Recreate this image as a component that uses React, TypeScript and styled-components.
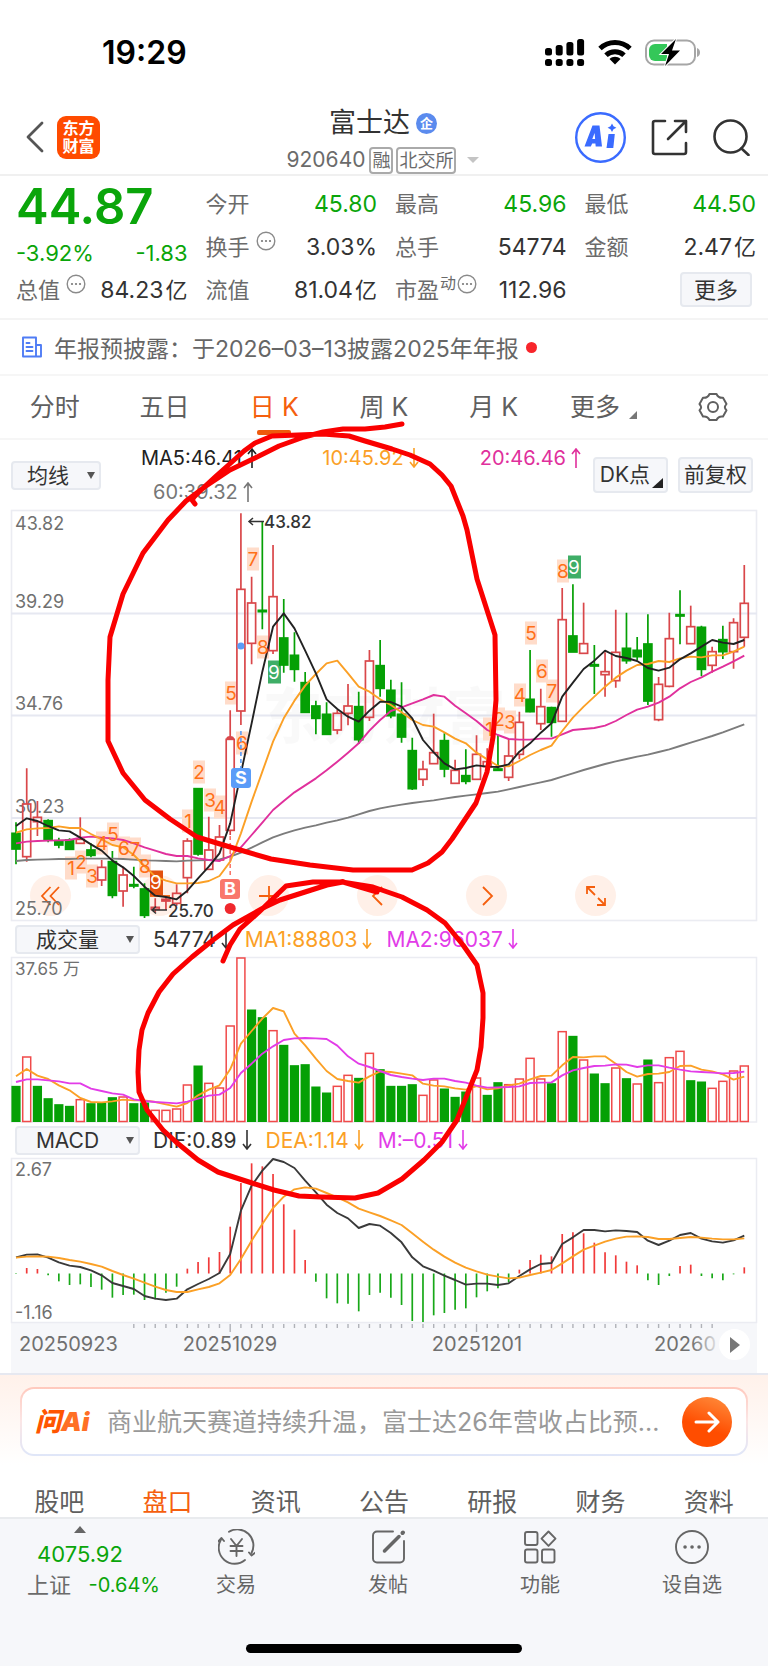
import React from "react";
import styled, { createGlobalStyle } from "styled-components";

const GREEN = "#0aa50a";
const UP = "#d9474a";
const DOWN = "#05a005";
const ORANGE = "#f55f0e";
const GOLD = "#fba026";
const PINK = "#e0309c";
const VIOLET = "#e23ce8";
const INK = "#333";
const MUTED = "#6b6b6b";

const Global = createGlobalStyle`
  *, *::before, *::after { box-sizing: border-box; }
  body { margin: 0; background: #fff; }
  body, button, select {
    font-family: Inter, "Noto Sans CJK SC", sans-serif;
    color: ${INK};
  }
  button { border: 0; padding: 0; background: none; }
  a { color: inherit; text-decoration: none; }
  svg { display: block; }
`;

/* ---------- shell ---------- */

const Page = styled.main`
  position: relative;
  display: flex;
  flex-direction: column;
  background: #fff;
  overflow: hidden;
`;

const StatusBar = styled.div`
  display: flex;
  align-items: center;
  justify-content: space-between;
  padding: 32px 67px 24px 102px;
  line-height: 40px;
`;

const Clock = styled.time`
  padding-top: 1px;
  font-size: 32px;
  font-weight: 600;
  line-height: 39px;
  color: #000;
`;

const StatusIcons = styled.div`
  display: flex;
  align-items: center;
  gap: 13px;
`;

const Header = styled.header`
  display: grid;
  grid-template-columns: 1fr auto 1fr;
  align-items: center;
  height: 80px;
  padding: 0 18px 0 26px;
  border-bottom: 2px solid #f0f0f0;
`;

const HeaderSide = styled.div<{ $end?: boolean }>`
  display: flex;
  align-items: center;
  justify-content: ${(p) => (p.$end ? "flex-end" : "flex-start")};
  gap: ${(p) => (p.$end ? 25 : 13)}px;
`;

const Logo = styled.a`
  display: grid;
  place-content: center;
  width: 43px;
  height: 43px;
  border-radius: 9px;
  background: #ff4b00;
  color: #fff;
  font-size: 16px;
  font-weight: 700;
  line-height: 18px;
`;

const Title = styled.div`
  display: flex;
  flex-direction: column;
  align-items: center;
  padding: 8px 10px 0 0;
`;

const NameRow = styled.h1`
  display: flex;
  align-items: center;
  gap: 6px;
  margin: 0;
  font-size: 27px;
  font-weight: 400;
  line-height: 38px;
`;

const Badge = styled.span`
  width: 21px;
  height: 21px;
  border-radius: 50%;
  background: #5b8bee;
  color: #fff;
  font-size: 13px;
  font-weight: 700;
  line-height: 21px;
  text-align: center;
`;

const CodeRow = styled.div`
  display: flex;
  align-items: center;
  gap: 4px;
  font-size: 21px;
  line-height: 36px;
  color: ${MUTED};
`;

const Tag = styled.span`
  height: 27px;
  padding: 0 1px;
  border: 2px solid #aaa;
  border-radius: 4px;
  font-size: 18px;
  line-height: 23px;
  & + & { margin-left: -1px; }
`;

const Caret = styled.span`
  margin-left: 7px;
  border: 6px solid transparent;
  border-top-color: #c4c4c4;
  border-bottom: 0;
`;

/* ---------- quote ---------- */

const Quote = styled.section`
  display: grid;
  grid-template-columns: repeat(4, 1fr);
  grid-auto-rows: 43px;
  column-gap: 18px;
  padding: 6px 12px 7px 16px;
  border-bottom: 2px solid #f4f4f4;
`;

const PriceBlock = styled.div`
  grid-row: span 2;
  display: flex;
  flex-direction: column;
  color: ${GREEN};
`;

const Price = styled.strong`
  font-size: 49px;
  font-weight: 600;
  line-height: 50px;
`;

const Change = styled.div`
  display: flex;
  justify-content: space-between;
  font-size: 22px;
  line-height: 43px;
`;

const Cell = styled.div<{ $green?: boolean }>`
  display: flex;
  align-items: center;
  font-size: 22px;
  line-height: 30px;
  white-space: nowrap;
  color: ${MUTED};
  b {
    margin-left: auto;
    font-size: 23px;
    font-weight: 400;
    color: ${(p) => (p.$green ? GREEN : INK)};
  }
  sup {
    align-self: flex-start;
    font-size: 16px;
    line-height: 30px;
    padding-left: 1px;
  }
`;

const Unit = styled.span`
  margin-left: 2px;
  font-size: 22px;
`;

const Hint = styled.svg`
  align-self: flex-start;
  margin: 6px 0 0 6px;
  sup + & { margin-left: 1px; }
`;

const SoftButton = styled.button<{ $size: number }>`
  position: relative;
  height: ${(p) => p.$size}px;
  padding: 0 9px;
  border: 2px solid #e6e9ef;
  border-radius: 4px;
  background: #f6f7fa;
  font-size: 21px;
  line-height: 30px;
  white-space: nowrap;
`;

const MoreButton = styled(SoftButton)`
  margin: 0 4px 0 auto;
  padding: 0 12px;
  font-size: 22px;
`;

const News = styled.a`
  display: flex;
  align-items: center;
  height: 56px;
  padding: 0 21px;
  border-bottom: 2px solid #f6f6f6;
  font-size: 23px;
  color: #666;
  white-space: nowrap;
  span { margin-left: 11px; }
`;

const RedDot = styled.i`
  width: 11px;
  height: 11px;
  margin-left: 7px;
  border-radius: 50%;
  background: #f8252b;
`;

/* ---------- tabs ---------- */

const Tabs = styled.nav<{ $low?: boolean }>`
  display: grid;
  grid-template-columns: repeat(7, 1fr);
  height: ${(p) => (p.$low ? 33 : 64)}px;
  padding: 0 ${(p) => (p.$low ? 5 : 0)}px;
  border-bottom: 2px solid ${(p) => (p.$low ? "#e9ebee" : "#f6f6f6")};
`;

const Tab = styled.button<{ $active?: boolean; $line?: boolean }>`
  position: relative;
  display: flex;
  align-items: center;
  justify-content: center;
  font-size: 25px;
  line-height: 30px;
  white-space: nowrap;
  color: ${(p) => (p.$active ? ORANGE : "#5f5f5f")};
  &::after {
    content: "";
    display: ${(p) => (p.$active && p.$line ? "block" : "none")};
    position: absolute;
    bottom: 3px;
    width: 34px;
    height: 5px;
    border-radius: 2px;
    background: #ee5a0c;
  }
`;

const Corner = styled.i<{ $over?: boolean }>`
  position: ${(p) => (p.$over ? "absolute" : "static")};
  right: 3px;
  bottom: 3px;
  align-self: flex-end;
  margin: ${(p) => (p.$over ? "0" : "0 0 19px 9px")};
  border-left: ${(p) => (p.$over ? 11 : 8)}px solid transparent;
  border-bottom: ${(p) => (p.$over ? 10 : 8)}px solid ${(p) => (p.$over ? "#222" : "#777")};
`;

/* ---------- chart ---------- */

const Averages = styled.div`
  display: flex;
  align-items: center;
  height: 70px;
  padding: 0 15px 0 11px;
`;

const Picker = styled.label<{ $wide?: boolean }>`
  position: relative;
  display: block;
  width: ${(p) => (p.$wide ? 125 : 90)}px;
  flex: none;
  &::after {
    content: "";
    position: absolute;
    right: 6px;
    top: 11px;
    border: 4px solid transparent;
    border-top: 7px solid #555;
    border-bottom: 0;
  }
  select {
    display: block;
    appearance: none;
    width: 100%;
    height: 29px;
    padding: 0 ${(p) => (p.$wide ? 20 : 16)}px 0 0;
    border: 2px solid #e6e9ef;
    border-radius: 4px;
    background: #f6f7fa;
    font-size: 21px;
    line-height: 25px;
    text-align: center;
    text-align-last: center;
  }
`;

const AverageGrid = styled.div`
  flex: 1;
  display: grid;
  grid-template-columns: 1fr 1fr auto;
  align-items: center;
  padding: 0 11px 0 40px;
  line-height: 34px;
`;

const Reading = styled.span<{ $color: string; $inset?: boolean }>`
  display: flex;
  align-items: center;
  gap: 4px;
  padding-left: ${(p) => (p.$inset ? 12 : 0)}px;
  font-size: 20px;
  white-space: nowrap;
  color: ${(p) => p.$color};
`;

const ButtonPair = styled.div`
  display: flex;
  gap: 10px;
`;

const PairButton = styled(SoftButton)<{ $pick?: boolean }>`
  width: 75px;
  padding: 0 ${(p) => (p.$pick ? 11 : 0)}px 0 0;
`;

const PlotArea = styled.div`
  position: relative;
  margin: 0 11px;
`;

const Plot = styled.svg`
  position: relative;
  z-index: 1;
  width: 100%;
  height: auto;
  overflow: visible;
  pointer-events: none;
  text { font-family: Inter, "Noto Sans CJK SC", sans-serif; }
`;

const Controls = styled.div`
  position: absolute;
  left: 19px;
  bottom: 5px;
  display: flex;
  gap: 68px;
`;

const RoundButton = styled.button`
  display: grid;
  place-items: center;
  width: 41px;
  height: 41px;
  border-radius: 50%;
  background: #fff0e8;
`;

const Indicator = styled.div`
  display: flex;
  align-items: center;
  gap: 13px;
  height: 36px;
  padding: 0 15px;
  ${Reading} { font-size: 21px; }
`;

const Axis = styled.div`
  position: relative;
  margin: 0 11px;
  background: #f6f7fa;
`;

const PlayButton = styled.button`
  position: absolute;
  z-index: 2;
  right: 7px;
  top: 6px;
  display: grid;
  place-items: center;
  width: 31px;
  height: 31px;
  border-radius: 50%;
  background: #fff;
`;

/* ---------- assistant and footer ---------- */

const AskSection = styled.section`
  padding: 12px 20px 30px;
  border-top: 2px solid #e6e8f0;
  background: linear-gradient(#fff1ea, #fff 90px);
`;

const AskFrame = styled.div`
  padding: 2px;
  border-radius: 14px;
  background: linear-gradient(#ffc9bd, #fbe6e6 50%, #dfe6f8);
`;

const AskBox = styled.div`
  display: flex;
  align-items: center;
  height: 65px;
  padding: 0 14px 0 13px;
  border-radius: 12px;
  background: #fff;
`;

const AskLogo = styled.strong`
  flex: none;
  width: 58px;
  font-size: 26px;
  font-style: italic;
  font-weight: 900;
  line-height: 30px;
  white-space: nowrap;
  color: #ff5500;
  span { color: #ff6f25; }
`;

const AskText = styled.span`
  flex: 1;
  min-width: 0;
  padding-left: 14px;
  font-size: 25px;
  line-height: 32px;
  color: #999;
  white-space: nowrap;
`;

const SendButton = styled.button`
  display: grid;
  place-items: center;
  flex: none;
  width: 50px;
  height: 50px;
  border-radius: 50%;
  background: linear-gradient(20deg, #ff4d00 40%, #ff9040);
`;

const Dock = styled.footer`
  display: flex;
  flex-direction: column;
  background: #f6f7fa;
`;

const DockRow = styled.nav`
  display: grid;
  grid-template-columns: 160px repeat(4, 1fr);
  height: 125px;
  padding-top: 7px;
`;

const IndexCard = styled.a`
  display: flex;
  flex-direction: column;
  padding-left: 27px;
  font-size: 22px;
  line-height: 31px;
  color: ${GREEN};
  &::before {
    content: "";
    align-self: flex-start;
    margin: 0 0 6px 47px;
    border: 6px solid transparent;
    border-top: 0;
    border-bottom: 7px solid #666;
  }
`;

const IndexValue = styled.span`
  padding-left: 10px;
`;

const IndexLine = styled.span`
  display: flex;
  justify-content: space-between;
  font-size: 20px;
  em { font-style: normal; font-size: 22px; color: ${MUTED}; }
`;

const DockItem = styled.button`
  display: flex;
  flex-direction: column;
  align-items: center;
  padding-top: 3px;
  font-size: 20px;
  line-height: 40px;
  color: #666;
`;

const HomeBar = styled.div`
  align-self: center;
  width: 36%;
  height: 9px;
  margin-bottom: 14px;
  border-radius: 5px;
  background: #000;
`;

const Ink = styled.svg`
  position: absolute;
  z-index: 3;
  inset: 0;
  width: 100%;
  height: auto;
  pointer-events: none;
`;

/* ---------- data ---------- */

// Levels in the plots are stored at three steps per pixel.
const STEP = 3;
const xAt = (i: number) => 5 + i * 10.71;
const yAt = (level: number, top: number) => (level - top) / STEP;

// direction, high, body top, body bottom, low
type Candle = [0 | 1, number, number, number, number];
const candles: Candle[] = [
  [0, 967, 1000, 1047, 1093], [1, 805, 912, 1070, 1085], [1, 903, 952, 965, 1008], [0, 958, 962, 1020, 1027],
  [0, 1013, 1022, 1035, 1045], [0, 1015, 1020, 1048, 1050], [1, 952, 1018, 1030, 1030], [0, 1030, 1050, 1066, 1072],
  [1, 1080, 1102, 1140, 1158], [0, 1053, 1085, 1186, 1195], [1, 1100, 1125, 1173, 1220], [0, 1100, 1154, 1158, 1165],
  [0, 1150, 1167, 1246, 1254], [1, 1195, 1222, 1228, 1237], [1, 1190, 1198, 1203, 1230], [1, 1153, 1180, 1210, 1217],
  [1, 1015, 1023, 1133, 1180], [0, 866, 866, 1062, 1067], [1, 950, 1050, 1108, 1110], [1, 975, 1011, 1080, 1085],
  [1, 631, 718, 991, 1005], [1, 40, 268, 633, 675], [1, 230, 309, 430, 493], [0, 65, 331, 335, 388],
  [1, 135, 290, 452, 462], [0, 297, 414, 495, 518], [0, 397, 466, 508, 545], [0, 516, 548, 637, 637],
  [0, 602, 618, 655, 703], [0, 607, 643, 703, 705], [1, 630, 640, 690, 703], [1, 552, 618, 640, 676],
  [0, 575, 620, 719, 732], [1, 450, 483, 652, 663], [0, 420, 497, 565, 590], [0, 539, 571, 647, 655],
  [0, 547, 643, 711, 728], [0, 713, 752, 866, 870], [1, 782, 808, 838, 858], [1, 641, 758, 791, 791],
  [0, 700, 722, 807, 832], [1, 779, 811, 850, 852], [0, 748, 827, 844, 853], [1, 706, 763, 838, 840],
  [1, 745, 785, 800, 820], [0, 705, 807, 811, 812], [1, 717, 768, 832, 843], [1, 635, 667, 763, 778],
  [0, 450, 598, 635, 637], [1, 566, 620, 671, 690], [0, 620, 623, 667, 710], [1, 264, 359, 664, 665],
  [0, 253, 408, 456, 456], [1, 308, 431, 460, 460], [0, 435, 494, 498, 582], [1, 457, 515, 524, 590],
  [1, 329, 457, 542, 563], [0, 338, 445, 482, 491], [0, 411, 451, 470, 480], [0, 343, 432, 603, 615],
  [1, 531, 553, 659, 664], [1, 338, 416, 559, 562], [0, 271, 344, 348, 433], [1, 317, 380, 431, 431],
  [0, 377, 382, 508, 528], [1, 440, 455, 496, 518], [0, 377, 419, 455, 477], [1, 355, 368, 455, 506],
  [1, 195, 310, 412, 440],
];

const ma5 = [978, 955, 963, 978, 991, 994, 1013, 1033, 1052, 1082, 1102, 1128, 1160, 1187, 1191, 1198, 1172, 1135, 1100, 1060, 970, 820, 670, 515, 380, 340, 385, 452, 520, 598, 627, 650, 665, 632, 605, 606, 620, 655, 720, 757, 790, 808, 804, 796, 800, 801, 793, 755, 730, 698, 670, 590, 548, 507, 482, 452, 468, 474, 483, 504, 512, 503, 478, 460, 440, 420, 428, 432, 420];
const ma10 = [998, 988, 985, 984, 979, 984, 984, 1002, 1018, 1035, 1042, 1065, 1098, 1130, 1142, 1150, 1150, 1149, 1143, 1128, 1085, 1000, 905, 815, 725, 655, 602, 557, 522, 490, 482, 520, 560, 575, 598, 615, 637, 660, 675, 680, 697, 716, 730, 758, 778, 798, 799, 783, 765, 750, 737, 693, 653, 620, 590, 560, 533, 512, 495, 492, 483, 486, 475, 470, 472, 466, 466, 455, 440];
const ma20 = [1030, 1025, 1023, 1022, 1021, 1020, 1013, 1010, 1013, 1015, 1020, 1030, 1042, 1052, 1062, 1068, 1068, 1075, 1080, 1083, 1068, 1042, 1005, 968, 930, 903, 877, 856, 835, 811, 785, 758, 730, 692, 660, 633, 622, 610, 598, 585, 590, 617, 640, 663, 690, 705, 717, 719, 719, 716, 716, 703, 690, 687, 684, 677, 663, 645, 629, 620, 608, 590, 565, 546, 532, 515, 500, 484, 467];
const ma60 = [1083, 1080, 1079, 1078, 1077, 1077, 1076, 1076, 1076, 1076, 1077, 1079, 1081, 1082, 1083, 1084, 1082, 1081, 1080, 1078, 1070, 1058, 1043, 1027, 1012, 1001, 991, 983, 976, 968, 961, 953, 943, 933, 925, 919, 914, 909, 905, 901, 896, 891, 887, 883, 879, 875, 868, 861, 854, 847, 840, 830, 820, 810, 801, 792, 784, 777, 770, 764, 756, 748, 738, 728, 718, 708, 697, 685, 673];

const volumes = [498, 410, 498, 535, 553, 558, 538, 550, 548, 532, 530, 550, 548, 570, 570, 566, 494, 437, 489, 503, 317, 113, 269, 292, 331, 375, 436, 433, 500, 518, 498, 465, 474, 399, 448, 498, 498, 493, 525, 479, 506, 531, 515, 473, 525, 487, 493, 476, 414, 476, 490, 334, 348, 419, 461, 490, 443, 475, 491, 419, 487, 412, 393, 481, 485, 504, 483, 452, 437];
const volumeDirs = [0, 1, 0, 0, 0, 0, 1, 0, 0, 0, 1, 0, 0, 1, 1, 1, 1, 0, 1, 1, 1, 1, 0, 0, 1, 0, 0, 0, 0, 0, 1, 1, 0, 1, 0, 0, 0, 0, 1, 1, 0, 0, 0, 1, 0, 0, 1, 1, 1, 1, 0, 1, 0, 1, 0, 0, 1, 0, 1, 0, 1, 1, 1, 0, 0, 1, 1, 1, 1];
const volMa1 = [468, 446, 466, 476, 495, 510, 533, 545, 546, 543, 538, 540, 540, 545, 552, 559, 548, 525, 508, 495, 447, 370, 332, 295, 263, 273, 340, 375, 415, 452, 476, 482, 487, 468, 453, 455, 460, 465, 490, 496, 498, 504, 508, 497, 507, 504, 495, 490, 477, 467, 466, 435, 410, 411, 408, 408, 430, 455, 469, 461, 460, 455, 437, 436, 448, 453, 462, 478, 469];
const volMa2 = [485, 477, 477, 480, 483, 489, 489, 505, 512, 519, 523, 537, 542, 545, 547, 549, 544, 535, 526, 523, 503, 458, 430, 400, 378, 359, 354, 353, 354, 356, 376, 408, 430, 440, 452, 464, 470, 475, 479, 475, 475, 482, 487, 496, 502, 501, 500, 498, 488, 487, 486, 465, 450, 443, 437, 436, 432, 433, 440, 435, 435, 442, 448, 453, 455, 457, 459, 458, 454];

const macd = [460, 442, 445, 464, 482, 493, 491, 499, 507, 531, 523, 522, 538, 536, 516, 498, 444, 424, 410, 394, 318, 187, 128, 137, 160, 251, 327, 418, 483, 533, 548, 549, 572, 523, 516, 531, 553, 601, 604, 584, 577, 567, 563, 530, 512, 503, 485, 447, 418, 402, 407, 340, 335, 338, 366, 395, 404, 423, 434, 479, 493, 466, 436, 432, 466, 473, 479, 461, 440];
const dif = [410, 402, 401, 411, 425, 435, 439, 449, 464, 487, 496, 505, 526, 534, 538, 534, 506, 490, 475, 457, 400, 270, 195, 150, 115, 124, 142, 180, 215, 252, 277, 293, 322, 310, 315, 337, 365, 410, 437, 450, 465, 478, 492, 489, 489, 493, 488, 466, 446, 430, 427, 370, 350, 328, 328, 332, 329, 331, 334, 360, 373, 360, 343, 337, 354, 362, 366, 359, 345];
const dea = [411, 408, 407, 408, 412, 418, 423, 430, 438, 451, 463, 474, 486, 498, 508, 514, 514, 506, 499, 488, 463, 415, 360, 310, 262, 228, 206, 200, 204, 217, 230, 245, 264, 275, 286, 299, 313, 338, 363, 387, 408, 426, 441, 452, 462, 468, 473, 471, 463, 456, 448, 428, 407, 387, 375, 363, 354, 348, 347, 349, 355, 355, 352, 349, 351, 354, 356, 356, 353];

// label, centre x, centre y, style
const counts: [string, number, number, "n" | "g" | "r"][] = [
  ["1", 60, 358, "n"], ["2", 70, 352, "n"], ["3", 81, 366, "n"], ["4", 91, 333, "n"], ["5", 102, 324, "n"],
  ["6", 113, 338, "n"], ["7", 124, 339, "n"], ["8", 134, 356, "n"], ["9", 145, 372, "r"], ["1", 177, 311, "n"],
  ["2", 188, 262, "n"], ["3", 199, 290, "n"], ["4", 209, 297, "n"], ["5", 220, 183, "n"], ["6", 231, 233, "n"],
  ["7", 242, 49, "n"], ["8", 252, 137, "n"], ["9", 263, 162, "g"], ["1", 478, 219, "n"], ["2", 488, 209, "n"],
  ["3", 499, 212, "n"], ["4", 509, 185, "n"], ["5", 520, 123, "n"], ["6", 531, 161, "n"], ["7", 541, 181, "n"],
  ["8", 552, 61, "n"], ["9", 563, 57, "g"],
];
const countFill = { n: "#ffdcca", g: "#3fae67", r: "#e2510f" };

/* ---------- drawing helpers ---------- */

const Trend = ({ levels, top, color }: { levels: number[]; top: number; color: string }) => (
  <polyline
    fill="none"
    stroke={color}
    strokeWidth={1.9}
    strokeLinejoin="round"
    points={levels.map((v, i) => `${xAt(i)},${yAt(v, top)}`).join(" ")}
  />
);

const Arrow = ({ up }: { up?: boolean }) => (
  <svg width="12" height="20" viewBox="0 0 12 20" fill="none" stroke="currentColor" strokeWidth="1.6" aria-hidden="true">
    <path d={up ? "M6 20V1M2 6l4-5 4 5" : "M6 0v19M2 14l4 5 4-5"} />
  </svg>
);

const Dots = () => (
  <Hint width="20" height="20" viewBox="0 0 20 20" aria-hidden="true">
    <circle cx="10" cy="10" r="8.8" fill="none" stroke="#8a8a8a" strokeWidth="1.4" />
    {[6, 10, 14].map((x) => (
      <circle key={x} cx={x} cy="10" r="1.1" fill="#777" />
    ))}
  </Hint>
);

const PriceChart = () => (
  <Plot viewBox="0 0 746 411" role="img" aria-label="日K线图">
    <rect x="0.5" y="0.5" width="745" height="410" fill="none" stroke="#ebecf2" strokeWidth="1.6" />
    {[103.5, 205.5, 308].map((y) => (
      <path key={y} d={`M0 ${y}H746`} stroke="#e6e8f1" strokeWidth="1.8" />
    ))}
    <text x="251" y="229" fontSize="61" fontWeight="700" fill="#000" fillOpacity="0.025">东方财富</text>
    {counts.map(([, x, y, kind], i) => (
      <rect key={i} x={x - 6} y={y - 11.5} width={kind === "n" ? 12 : 13} height={kind === "r" ? 25 : 23} fill={countFill[kind]} />
    ))}
    {["43.82", "39.29", "34.76", "30.23", "25.70"].map((t, i) => (
      <text key={t} x="4" y={[20, 98, 200, 303, 405][i]} fontSize="18" fill="#707070">{t}</text>
    ))}
    {candles.map(([up, h, t, b, l], i) => {
      const x = xAt(i);
      const [hy, ty, by, ly] = [h, t, b, l].map((v) => yAt(v, 30));
      const color = up ? UP : DOWN;
      return (
        <g key={i} stroke={color} strokeWidth="1.7">
          <path d={`M${x} ${hy}V${ty}M${x} ${by}V${ly}`} />
          <rect x={x - 4} y={ty} width="8" height={Math.max(by - ty, 0.6)} fill={up ? "none" : color} />
        </g>
      );
    })}
    <path d={`M${xAt(20) - 4} 229a4 3 0 0 1 8 0z`} fill={UP} />
    <Trend levels={ma60} top={30} color="#7c7c7c" />
    <Trend levels={ma20} top={30} color={PINK} />
    <Trend levels={ma10} top={30} color={GOLD} />
    <Trend levels={ma5} top={30} color="#222" />
    {counts.map(([label, x, y, kind], i) => (
      <text key={i} x={x} y={y + 7} fontSize="19" textAnchor="middle" fill={kind === "n" ? "#ff7018" : "#fff"}>{label}</text>
    ))}
    <path d={`M${xAt(21)} 221V262`} stroke="#5a9cf8" strokeWidth="1.6" strokeDasharray="4 3" />
    <circle cx={xAt(21)} cy="136" r="3.6" fill="#5a9cf8" />
    <rect x="220" y="258" width="20" height="20" rx="3" fill="#5a9cf8" />
    <path d={`M${xAt(20)} 326V366`} stroke="#f9776b" strokeWidth="1.6" strokeDasharray="4 3" />
    <rect x="209" y="369" width="20" height="20" rx="3" fill="#f9776b" />
    <text x="230" y="274" fontSize="18" fontWeight="700" textAnchor="middle" fill="#fff">S</text>
    <text x="219" y="385" fontSize="18" fontWeight="700" textAnchor="middle" fill="#fff">B</text>
    <circle cx={xAt(20)} cy="398.5" r="5.5" fill="#f0282d" />
    <g fill="none" stroke="#333" strokeWidth="1.5">
      <path d="M253 11.5h-15M242 8l-4 3.5 4 3.5" />
      <path d="M156 400h-15M145 396.5l-4 3.5 4 3.5" />
    </g>
    <text x="253" y="18" fontSize="17" fontWeight="500" fill="#333">43.82</text>
    <text x="157" y="407" fontSize="17" fontWeight="500" fill="#333">25.70</text>
  </Plot>
);

const VolumeChart = () => (
  <Plot viewBox="0 0 746 165" role="img" aria-label="成交量">
    <rect x="0.5" y="0.5" width="745" height="164.5" fill="#fff" stroke="#ebecf2" strokeWidth="1.5" />
    <text x="4" y="18" fontSize="17" fill="#707070">37.65 万</text>
    {volumes.map((v, i) => {
      const y = yAt(v, 110);
      return volumeDirs[i] ? (
        <rect key={i} x={xAt(i) - 4} y={y} width="8" height={164.5 - y} fill="#fff" stroke="#f04a4a" strokeWidth="1.5" />
      ) : (
        <rect key={i} x={xAt(i) - 4.6} y={y - 0.5} width="9.2" height={165.5 - y} fill={DOWN} />
      );
    })}
    <Trend levels={volMa1} top={110} color={GOLD} />
    <Trend levels={volMa2} top={110} color={VIOLET} />
  </Plot>
);

const MacdChart = () => (
  <Plot viewBox="0 0 746 165" role="img" aria-label="MACD">
    <rect x="0.5" y="0.5" width="745" height="164" fill="#fff" stroke="#ebecf2" strokeWidth="1.5" />
    {macd.map((v, i) => (
      <path key={i} d={`M${xAt(i)} 115.5V${yAt(v, 112)}`} stroke={v < 458 ? "#f13a3a" : "#18a818"} strokeWidth="1.7" />
    ))}
    <Trend levels={dif} top={112} color="#3a3a3a" />
    <Trend levels={dea} top={112} color={GOLD} />
    <text x="4" y="18" fontSize="18" fill="#707070">2.67</text>
    <text x="4" y="161" fontSize="18" fill="#707070">-1.16</text>
  </Plot>
);

const DateAxis = () => (
  <Plot viewBox="0 0 746 50" aria-hidden="true">
    <defs>
      <linearGradient id="fade">
        <stop offset="0.6" stopColor="#707070" />
        <stop offset="1" stopColor="#707070" stopOpacity="0.2" />
      </linearGradient>
    </defs>
    {Array.from({ length: 55 }, (_, k) => k + 11).map((i) => (
      <path key={i} d={`M${xAt(i)} 1V${i === 20 || i === 43 ? 9 : 5}`} stroke="#b0b2b8" strokeWidth="1.4" />
    ))}
    <g fontSize="20" fill="#707070">
      <text x="8" y="28">20250923</text>
      <text x="219" y="28" textAnchor="middle">20251029</text>
      <text x="466" y="28" textAnchor="middle">20251201</text>
      <text x="643" y="28" fill="url(#fade)">20260</text>
    </g>
  </Plot>
);

const HandMarks = () => (
  <Ink viewBox="0 0 768 1666" fill="none" stroke="#fa0000" strokeWidth="5" strokeLinecap="round" strokeLinejoin="round" aria-hidden="true">
    <polyline points="402,424 385,427 365,429 343,429 323,432 304,437 279,446 255,458 230,470 206,486 186,501 168,520 143,553 123,594 110,637 108,680 108,741 123,773 145,800 170,819 197,837 230,847 271,859 310,865 353,870 412,870 428,863 442,852 452,839 476,803 487,772 493,737 496,700 495,635 477,579 467,530 463,516 451,486 442,475 430,464 410,455 392,449 365,441 349,436 323,434 298,435 272,436 255,443 244,451 233,461 215,477 201,490 194,497 192,500 195,504" />
    <polyline points="223,961 230,945 240,929 258,913 286,886 313,882 342,882 373,887 402,897 427,910 445,923 463,945 477,965 483,993 483,1018 481,1047 477,1070 457,1120 442,1142 424,1160 402,1179 378,1193 355,1198 321,1197 299,1196 274,1190 252,1183 218,1172 198,1160 176,1142 163,1130 147,1110 139,1092 138,1072 139,1050 142,1030 148,1013 159,992 173,974 192,957 213,940 233,925 265,907 280,900 327,885 343,882 377,892" />
  </Ink>
);

const Wifi = () => (
  <svg width="34" height="26" viewBox="0 0 34 26" fill="none" stroke="#000" strokeWidth="5" aria-hidden="true">
    <path d="M2 9.5C10.5 1.5 23.5 1.5 32 9.5" />
    <path d="M8 16.2c5-4.700 13-4.700 18 0" />
    <path d="M11.5 20c3-2.900 8-2.900 11 0L17 25.500z" fill="#000" stroke="none" />
  </svg>
);

const Signal = () => (
  <svg width="40" height="27" viewBox="0 0 40 27" aria-hidden="true">
    {[9, 6, 3, 0].map((y, i) => (
      <g key={y}>
        <rect x={i * 10.7} y={y} width="7" height={16.5 - y} rx="2.5" />
        <rect x={i * 10.7} y="20" width="7" height="7" rx="2.5" />
      </g>
    ))}
  </svg>
);

const Battery = () => (
  <svg width="56" height="27" viewBox="0 0 56 27" aria-hidden="true">
    <rect x="1" y="1.5" width="49" height="24" rx="8" fill="#fff" stroke="#a6a6a6" strokeWidth="2" />
    <path d="M10 5h12v17H10a6 6 0 0 1-6-6V11a6 6 0 0 1 6-6z" fill="#34c759" />
    <path d="M52 9c4 1 4 8 0 9z" fill="#a6a6a6" />
    <path d="M31 0L16 15h8l-4 12L35 11.5h-8z" stroke="#fff" strokeWidth="2" paintOrder="stroke" />
  </svg>
);

const line = { fill: "none", stroke: "currentColor", strokeLinecap: "round" as const, strokeLinejoin: "round" as const };

const Control = ({ label, d }: { label: string; d: string }) => (
  <RoundButton aria-label={label}>
    <svg width="24" height="24" viewBox="0 0 24 24" fill="none" stroke={ORANGE} strokeWidth="1.8" aria-hidden="true">
      <path d={d} />
    </svg>
  </RoundButton>
);

const dockItems: { label: string; icon: React.ReactNode }[] = [
  {
    label: "交易",
    icon: (
      <>
        <path d="M11 2.8A16 16 0 0 1 33.5 24" />
        <path d="M27 31A16 16 0 0 1 3 10.5" />
        <path d="M0 12.5l3.5-3.5 2.5 3M31 23.5l2.5 3 4-3" />
        <path d="M13 10l5.5 7 5.5-7M12.5 17h12M12.5 22h12M18.500 17v10" />
      </>
    ),
  },
  {
    label: "发帖",
    icon: (
      <>
        <path d="M23 2.5H7a4 4 0 0 0-4 4v23a4 4 0 0 0 4 4h23a4 4 0 0 0 4-4V12" />
        <path d="M14.5 22L29 7.5" strokeWidth="3.5" />
        <path d="M32.5 4l.5-.5" strokeWidth="4" />
      </>
    ),
  },
  {
    label: "功能",
    icon: (
      <>
        <rect x="3" y="3" width="12.5" height="13" rx="2" />
        <rect x="3" y="20.5" width="12.5" height="13" rx="2" />
        <rect x="20" y="20.5" width="12.5" height="13" rx="2" />
        <path d="M26.5 2.5l7 7.2-7 7.2-7-7.2z" />
      </>
    ),
  },
  {
    label: "设自选",
    icon: (
      <>
        <circle cx="18" cy="18" r="16" />
        <path d="M11 18h.1M18 18h.1M25 18h.1" strokeWidth="3.5" />
      </>
    ),
  },
];

export default function App() {
  return (
    <Page>
      <Global />
      <StatusBar>
        <Clock>19:29</Clock>
        <StatusIcons>
          <Signal />
          <Wifi />
          <Battery />
        </StatusIcons>
      </StatusBar>

      <Header>
        <HeaderSide>
          <button aria-label="返回">
            <svg width="18" height="32" viewBox="0 0 18 32" {...line} strokeWidth="2.8" color="#555" aria-hidden="true">
              <path d="M16 2L2 16l14 14" />
            </svg>
          </button>
          <Logo href="#home">
            <span>东方</span>
            <span>财富</span>
          </Logo>
        </HeaderSide>
        <Title>
          <NameRow>
            富士达<Badge>企</Badge>
          </NameRow>
          <CodeRow>
            920640
            <Tag>融</Tag>
            <Tag>北交所</Tag>
            <Caret />
          </CodeRow>
        </Title>
        <HeaderSide $end>
          <button aria-label="AI 助手">
            <svg width="51" height="51" viewBox="0 0 51 51" fill="#3a6bff" aria-hidden="true">
              <circle cx="25.5" cy="25.5" r="24.3" fill="#fff" stroke="#3a6bff" strokeWidth="2.4" />
              <path fillRule="evenodd" d="M17.5 13.5h7l2.5 21h-6.300l-.3-3h-3.200l-1.400 3H9.500zM19.600 21l-2.300 6h2.800z" />
              <path d="M33.500 22h6.300l-1.500 14H31.500z" />
              <path d="M37 11.500l1.500 2.700 2.900 1.500-2.900 1.500L37 20l-1.500-2.800-2.900-1.500 2.900-1.500z" />
            </svg>
          </button>
          <button aria-label="分享">
            <svg width="37" height="37" viewBox="0 0 37 37" {...line} strokeWidth="2.6" color="#333" aria-hidden="true">
              <path d="M14 2H4a2 2 0 0 0-2 2v29a2 2 0 0 0 2 2h29a2 2 0 0 0 2-2V24M24 2h11v11M35 2L17 20" />
            </svg>
          </button>
          <button aria-label="搜索">
            <svg width="37" height="37" viewBox="0 0 37 37" {...line} strokeWidth="2.6" color="#333" aria-hidden="true">
              <circle cx="17.5" cy="17.5" r="16" />
              <path d="M28.5 29.5l7 6.5" />
            </svg>
          </button>
        </HeaderSide>
      </Header>

      <Quote>
        <PriceBlock>
          <Price>44.87</Price>
          <Change>
            <span>-3.92%</span>
            <span>-1.83</span>
          </Change>
        </PriceBlock>
        <Cell $green>今开<b>45.80</b></Cell>
        <Cell $green>最高<b>45.96</b></Cell>
        <Cell $green>最低<b>44.50</b></Cell>
        <Cell>换手<Dots /><b>3.03%</b></Cell>
        <Cell>总手<b>54774</b></Cell>
        <Cell>金额<b>2.47<Unit>亿</Unit></b></Cell>
        <Cell>总值<Dots /><b>84.23<Unit>亿</Unit></b></Cell>
        <Cell>流值<b>81.04<Unit>亿</Unit></b></Cell>
        <Cell>市盈<sup>动</sup><Dots /><b>112.96</b></Cell>
        <Cell><MoreButton $size={35}>更多</MoreButton></Cell>
      </Quote>

      <News href="#news">
        <svg width="22" height="22" viewBox="0 0 22 22" {...line} strokeWidth="1.9" color="#4f7cf5" aria-hidden="true">
          <path d="M2 1.5h13v19H2zM15 9h5v11.5h-5M5.500 7h3M5.500 11h6M5.500 15h6" />
        </svg>
        <span>年报预披露：于2026–03–13披露2025年年报</span>
        <RedDot />
      </News>

      <Tabs>
        <Tab>分时</Tab>
        <Tab>五日</Tab>
        <Tab $active $line>日 K</Tab>
        <Tab>周 K</Tab>
        <Tab>月 K</Tab>
        <Tab>更多<Corner /></Tab>
        <Tab aria-label="设置">
          <svg width="30" height="30" viewBox="0 0 30 30" {...line} strokeWidth="2" aria-hidden="true">
            <path d="M11.5 2h7c1.5 3.3 3 4.2 6.5 3.8L28.5 12c-2.200 2.800-2.200 3.700 0 6.300L25 24.500c-3.500-.5-5 .3-6.500 3.500h-7C10 24.800 8.500 24 5 24.500L1.500 18.300c2.200-2.700 2.200-3.600 0-6.300L5 5.800C8.500 6.200 10 5.300 11.500 2z" />
            <circle cx="15" cy="15" r="5" />
          </svg>
        </Tab>
      </Tabs>

      <Averages>
        <Picker>
          <select aria-label="主图指标"><option>均线</option></select>
        </Picker>
        <AverageGrid>
          <Reading $color="#222">MA5:46.41<Arrow up /></Reading>
          <Reading $color={GOLD} $inset>10:45.92<Arrow /></Reading>
          <Reading $color={PINK}>20:46.46<Arrow up /></Reading>
          <Reading $color="#777" $inset>60:39.32<Arrow up /></Reading>
        </AverageGrid>
        <ButtonPair>
          <PairButton $size={36} $pick>DK点<Corner $over /></PairButton>
          <PairButton $size={36}>前复权</PairButton>
        </ButtonPair>
      </Averages>

      <PlotArea>
        <Controls>
          <Control label="向左" d="M11.5 3L3 12l8.5 9M20 3l-8.5 9 8.5 9" />
          <Control label="缩小" d="M2 12h20" />
          <Control label="放大" d="M2 12h20M12 2v20" />
          <Control label="前移" d="M16 3l-9 9 9 9" />
          <Control label="后移" d="M8 3l9 9-9 9" />
          <Control label="全屏" d="M3 10V3h8M3 3l8 8M21 14v7h-8M21 21l-7-7" />
        </Controls>
        <PriceChart />
      </PlotArea>

      <Indicator>
        <Picker $wide>
          <select aria-label="副图一"><option>成交量</option></select>
        </Picker>
        <Reading $color={INK}>54774<Arrow /></Reading>
        <Reading $color={GOLD}>MA1:88803<Arrow /></Reading>
        <Reading $color={VIOLET}>MA2:96037<Arrow /></Reading>
      </Indicator>
      <PlotArea>
        <VolumeChart />
      </PlotArea>

      <Indicator>
        <Picker $wide>
          <select aria-label="副图二"><option>MACD</option></select>
        </Picker>
        <Reading $color={INK}>DIF:0.89<Arrow /></Reading>
        <Reading $color={GOLD}>DEA:1.14<Arrow /></Reading>
        <Reading $color={VIOLET}>M:–0.51<Arrow /></Reading>
      </Indicator>
      <PlotArea>
        <MacdChart />
      </PlotArea>
      <Axis>
        <DateAxis />
        <PlayButton aria-label="播放">
          <svg width="10" height="16" viewBox="0 0 10 16" fill="#777" aria-hidden="true">
            <path d="M0 0l10 8-10 8z" />
          </svg>
        </PlayButton>
      </Axis>

      <AskSection>
        <AskFrame>
          <AskBox>
            <AskLogo>问<span>Ai</span></AskLogo>
            <AskText>商业航天赛道持续升温，富士达26年营收占比预...</AskText>
            <SendButton aria-label="提问">
              <svg width="26" height="24" viewBox="0 0 26 24" {...line} strokeWidth="3" color="#fff" aria-hidden="true">
                <path d="M2 12h22M15 3l9 9-9 9" />
              </svg>
            </SendButton>
          </AskBox>
        </AskFrame>
      </AskSection>

      <Tabs $low>
        {["股吧", "盘口", "资讯", "公告", "研报", "财务", "资料"].map((t) => (
          <Tab key={t} $active={t === "盘口"}>{t}</Tab>
        ))}
      </Tabs>

      <Dock>
        <DockRow>
          <IndexCard href="#index">
            <IndexValue>4075.92</IndexValue>
            <IndexLine><em>上证</em>-0.64%</IndexLine>
          </IndexCard>
          {dockItems.map(({ label, icon }) => (
            <DockItem key={label}>
              <svg width="37" height="36" viewBox="0 0 37 36" {...line} strokeWidth="1.9" aria-hidden="true">{icon}</svg>
              {label}
            </DockItem>
          ))}
        </DockRow>
        <HomeBar />
      </Dock>

      <HandMarks />
    </Page>
  );
}
